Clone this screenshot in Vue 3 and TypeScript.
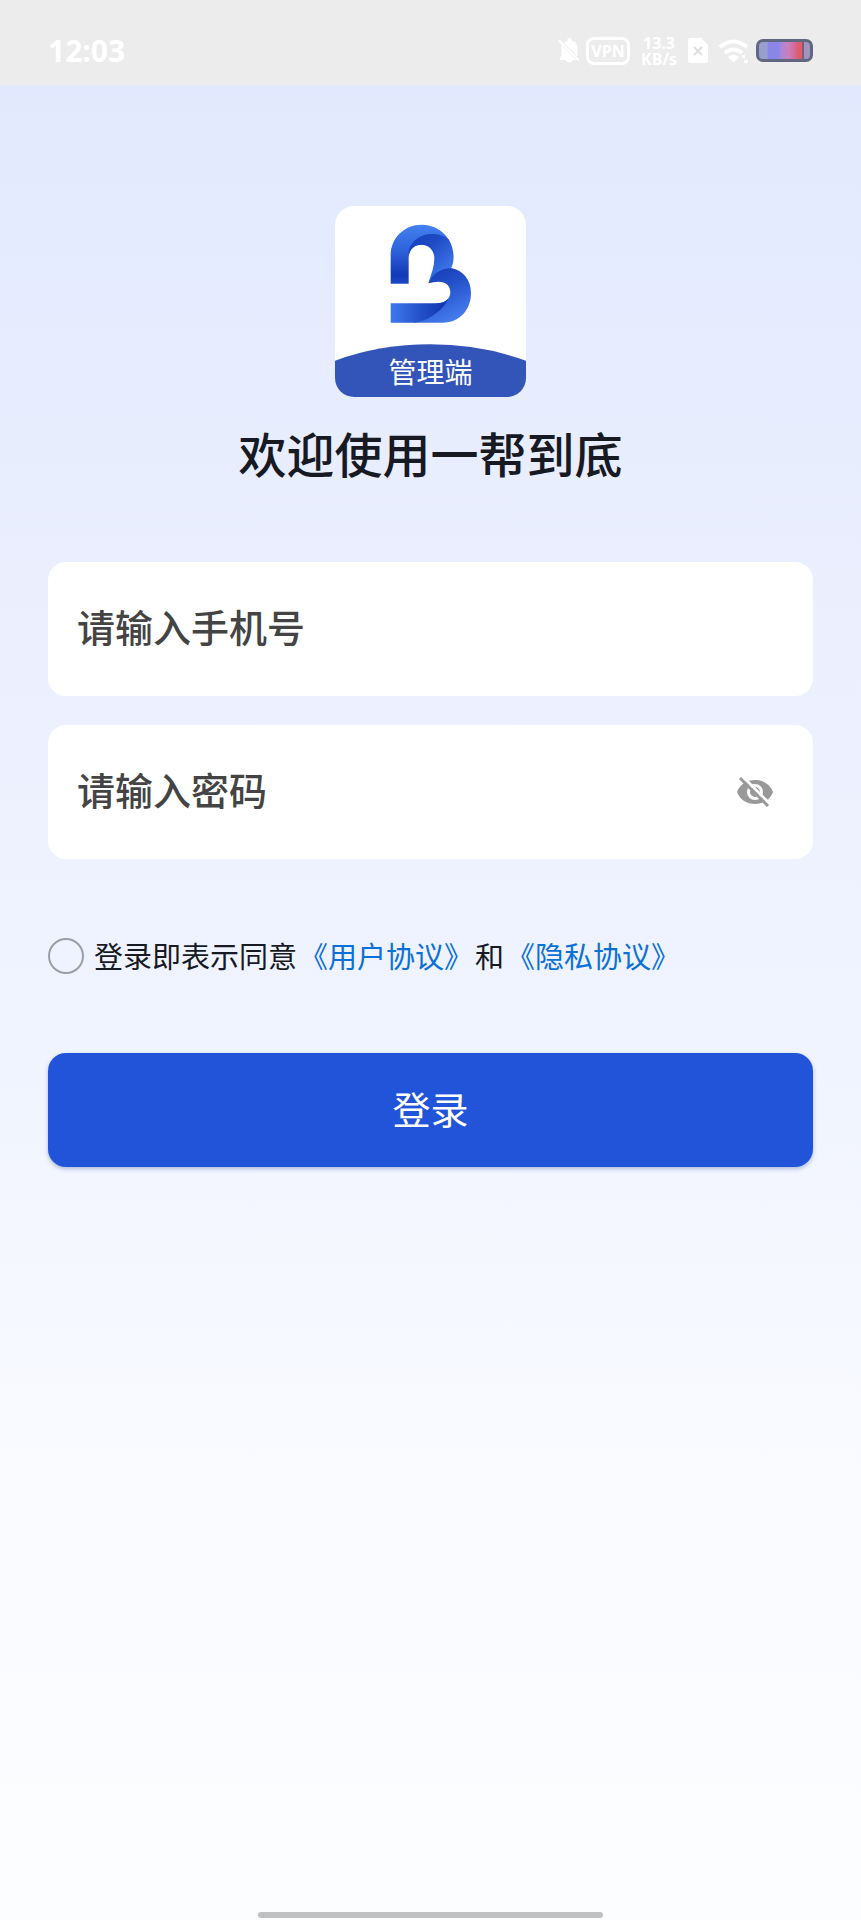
<script setup lang="ts">
import { ref } from 'vue'

const phone = ref('')
const password = ref('')
const showPassword = ref(false)
const agreed = ref(false)
</script>

<template>
  <div class="screen">
    <header class="status">
      <time class="clock">12:03</time>
      <div class="indicators">
        <svg class="bell" viewBox="0 0 22 26" aria-hidden="true">
          <path d="M6 5Q7.500 3 9.500 2.500V1.500a2 2 0 0 1 4 0v1c4 1 6 4 6 8v8zM3.500 7L18 22H2v-2l1.500-2zM7 22h8q-4 5-8 0z" />
          <path class="slash" d="M1 2.500l20 20" />
        </svg>
        <span class="vpn">VPN</span>
        <span class="speed"><b>13.3</b><b>KB/s</b></span>
        <svg class="sim" viewBox="0 0 20 25" aria-hidden="true">
          <path d="M2 0h11l7 7v16a2 2 0 0 1-2 2H2a2 2 0 0 1-2-2V2a2 2 0 0 1 2-2z" />
          <path class="cross" d="M6 9l8 8M14 9l-8 8" />
        </svg>
        <svg class="wifi" viewBox="0 0 32 24" aria-hidden="true">
          <path class="arc" d="M2 8Q15.500-3 29 8M7 14Q15.500 7 24 14" />
          <path d="M10 18q5.500-4.500 11 0l-5.500 5.500zM24 16h3v3h-3zM26 21h4v3h-4z" />
        </svg>
        <span class="battery"></span>
      </div>
    </header>

    <main class="content">
      <div class="logo">
        <svg viewBox="45 48 573 573" aria-hidden="true">
          <defs>
            <linearGradient id="arch" x1="0" y1="0" x2="0" y2="1">
              <stop offset="0" stop-color="#4480ee" />
              <stop offset=".45" stop-color="#2d62da" />
              <stop offset=".85" stop-color="#1439b6" />
              <stop offset="1" stop-color="#1d47c4" />
            </linearGradient>
            <linearGradient id="side" x1="0" y1="0" x2=".8" y2="1">
              <stop offset="0" stop-color="#1740bd" />
              <stop offset=".35" stop-color="#1d49c4" />
              <stop offset="1" stop-color="#4380f0" />
            </linearGradient>
            <linearGradient id="bowl" x1=".2" y1="0" x2=".7" y2="1">
              <stop offset="0" stop-color="#1238b4" />
              <stop offset=".4" stop-color="#2350c8" />
              <stop offset="1" stop-color="#477ff0" />
            </linearGradient>
            <linearGradient id="base" x1="0" y1="0" x2="1" y2="0">
              <stop offset="0" stop-color="#4079ed" />
              <stop offset=".6" stop-color="#1f4bc5" />
              <stop offset="1" stop-color="#0f32ab" />
            </linearGradient>
          </defs>
          <path fill="url(#arch)" d="M212 281V196C212 144 253 104 305 104C341 104 373 123 388 153L325 168C317 165 311 164 304 164C281 164 266 181 266 204V281Z" />
          <path fill="url(#side)" d="M266 204V180C276 150 305 132 335 132C357 132 376 138 386 148C398 168 404 195 399 218Q397 228 393 235Q350 245 325 280L338 239Q343 219 343 206C343 180 326 164 304 164C281 164 266 181 266 204Z" />
          <path fill="url(#bowl)" d="M325 280C337 252 360 236 393 234C430 241 453 270 453 309C453 360 418 398 368 398H280Q330 370 350 340C375 340 391 326 391 307C391 287 377 275 355 275Q341 275 325 280Z" />
          <path fill="url(#base)" d="M212 340H350Q372 340 384 327Q374 350 352 367Q320 394 285 398H212Z" />
          <path fill="#3355b9" d="M45 512Q180 463 331 463T618 512V621H45Z" />
        </svg>
        <span class="logo-label">管理端</span>
      </div>
      <h1>欢迎使用一帮到底</h1>

      <form @submit.prevent>
        <div class="field">
          <input v-model="phone" type="tel" placeholder="请输入手机号" aria-label="请输入手机号" />
        </div>
        <div class="field">
          <input v-model="password" :type="showPassword ? 'text' : 'password'" placeholder="请输入密码" aria-label="请输入密码" />
          <button type="button" class="eye" aria-label="显示密码" @click="showPassword = !showPassword">
            <svg viewBox="0 0 36 32" aria-hidden="true">
              <path class="lid" d="M0 16C3 8 10 4 18 4S33 8 36 16C33 24 26 28 18 28S3 24 0 16Z" />
              <circle class="ring" cx="18" cy="16" r="6.500" />
              <path class="gap" d="M5 0L34 29" />
              <path class="stroke" d="M3 2L31 30" />
            </svg>
          </button>
        </div>
        <div class="agreement">
          <input id="agree" v-model="agreed" type="checkbox" />
          <div class="terms">
            <label for="agree">登录即表示同意</label>
            <a href="#terms">《用户协议》</a>
            <span>和</span>
            <a href="#privacy">《隐私协议》</a>
          </div>
        </div>
        <button type="submit" class="submit">登录</button>
      </form>
    </main>
    <div class="home-bar"></div>
  </div>
</template>

<style>
body {
  margin: 0;
}
</style>

<style scoped>
.screen {
  box-sizing: border-box;
  display: flex;
  flex-direction: column;
  min-height: 100vh;
  padding-bottom: 2px;
  background: linear-gradient(#e0e8fe 0%, #e9eefe 25%, #eff3ff 50%, #f8faff 75%, #fcfdff 95%);
  color: #171923;
  font-family: "Noto Sans CJK SC", sans-serif;
}
.status {
  display: flex;
  align-items: center;
  justify-content: space-between;
  box-sizing: border-box;
  height: 85px;
  padding: 16px 48px 0;
  background: #ececec;
  color: #fff;
  font-family: "Noto Sans", sans-serif;
}
.clock {
  font-size: 30px;
  font-weight: 700;
  line-height: 32px;
}
.indicators {
  display: flex;
  align-items: center;
  gap: 10px;
}
.indicators svg {
  fill: #fff;
}
.bell {
  width: 22px;
  height: 26px;
}
.slash {
  stroke: #fff;
  stroke-width: 2;
}
.vpn {
  box-sizing: border-box;
  width: 44px;
  height: 28px;
  margin-left: -4px;
  border: 3px solid #fff;
  border-radius: 8px;
  font-size: 16px;
  font-weight: 700;
  line-height: 22px;
  text-align: center;
}
.speed {
  display: grid;
  width: 38px;
  font-family: "Open Sans", sans-serif;
  font-size: 16px;
  line-height: 16px;
  text-align: center;
}
.sim {
  width: 20px;
  height: 25px;
}
.cross {
  fill: none;
  stroke: #dedede;
  stroke-width: 2;
}
.wifi {
  width: 32px;
  height: 24px;
}
.arc {
  fill: none;
  stroke: #fff;
  stroke-width: 4;
}
.battery {
  box-sizing: border-box;
  width: 57px;
  height: 23px;
  margin-left: -4px;
  border: 3px solid #5f6880;
  border-radius: 7px;
  background: linear-gradient(90deg, #999fcb 0 16%, #8a86e8 18% 38%, #ac86d6 44%, #cb7fba 58%, #d4699b 70%, #db5f68 76% 84%, #7d5b7e 85% 88%, #a193bb 89%);
}
.content {
  flex: 1;
  padding: 121px 48px 40px;
}
.logo {
  display: grid;
  width: 191px;
  height: 191px;
  margin: 0 auto;
  overflow: hidden;
  border-radius: 19px;
  background: #fff;
}
.logo > * {
  grid-area: 1 / 1;
}
.logo svg {
  width: 100%;
  height: 100%;
}
.logo-label {
  align-self: end;
  padding-bottom: 10px;
  color: #fff;
  font-size: 28px;
  line-height: 32px;
  text-align: center;
}
h1 {
  margin: 20px 0 0;
  font-size: 48px;
  font-weight: 500;
  line-height: 70px;
  text-align: center;
}
form {
  display: flex;
  flex-direction: column;
  margin-top: 75px;
}
.field {
  display: flex;
  align-items: center;
  box-sizing: border-box;
  height: 134px;
  margin-bottom: 29px;
  padding: 0 40px 0 29px;
  border-radius: 18px;
  background: #fff;
}
.field input {
  flex: 1;
  min-width: 0;
  padding: 0 0 6px;
  border: 0;
  outline: 0;
  background: none;
  color: #444;
  font: 500 38px/56px "Noto Sans CJK SC", sans-serif;
}
.field input::placeholder {
  color: #444;
  opacity: 1;
}
.eye {
  display: flex;
  padding: 0;
  border: 0;
  background: none;
}
.eye svg {
  width: 36px;
  height: 32px;
}
.lid {
  fill: #999;
}
.ring {
  fill: #999;
  stroke: #fff;
  stroke-width: 3;
}
.gap,
.stroke {
  fill: none;
  stroke: #fff;
  stroke-width: 3;
}
.stroke {
  stroke: #999;
}
.agreement {
  display: flex;
  align-items: center;
  gap: 10px;
  margin: 48px 0 77px;
}
.agreement input {
  appearance: none;
  box-sizing: border-box;
  flex: none;
  width: 36px;
  height: 36px;
  margin: 0;
  border: 2px solid #9c9ea7;
  border-radius: 50%;
}
.agreement input:checked {
  border: 10px solid #2054d9;
}
.terms {
  display: flex;
  flex-wrap: wrap;
  gap: 2px;
  padding-bottom: 2px;
  font-size: 29px;
  line-height: 38px;
}
.terms a {
  color: #0b70d8;
  text-decoration: none;
}
.submit {
  height: 114px;
  padding: 0 0 4px;
  border: 0;
  border-radius: 18px;
  background: #2154d9;
  box-shadow: 0 2px 4px #4660a066;
  color: #fff;
  font: 400 38px/56px "Noto Sans CJK SC", sans-serif;
}
.home-bar {
  width: 40%;
  height: 6px;
  margin: 0 auto;
  border-radius: 3px;
  background: #bfc0c2;
}
</style>
